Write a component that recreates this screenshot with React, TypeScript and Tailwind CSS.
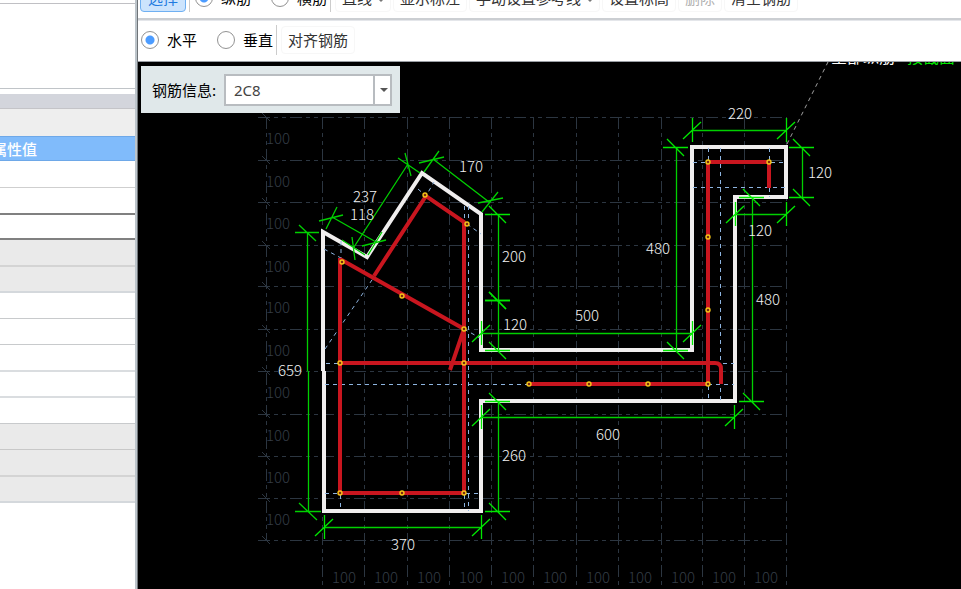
import { useState } from "react";

type Pt = [number, number];

const outline: Pt[] = [
  [323, 371], [323, 232], [367, 257], [422, 173], [481, 214], [481, 350], [692, 350],
  [692, 147], [786, 147], [786, 197], [735, 197], [735, 401], [481, 401], [481, 511],
  [324, 511], [324, 371],
];

const bars: string[] = [
  "M340 258V493H464V222L426 196L374 276",
  "M340 259L464 329L450 370",
  "M340 363H715Q721 363 721 369V384",
  "M529 384H708V162H769V188",
];

const nodes: Pt[] = [
  [342, 262], [402, 296], [425, 195], [467, 224], [464, 329], [340, 363], [464, 363],
  [340, 493], [402, 493], [464, 493], [529, 384], [589, 384], [648, 384], [708, 384],
  [708, 310], [708, 237], [708, 162], [769, 162],
];

const coverLines: string[] = [
  "M324 249L341 258", "M341 241V258", "M325 349L374 277", "M418 189L426 196L434 182",
  "M464.5 206V222", "M468.5 206V511", "M467 224L481 234", "M464 329L480 338",
  "M326 363.5H340", "M325 384.5H529", "M325 493.5H340", "M466 493.5H480",
  "M340.5 495V510", "M464.5 495V511", "M720.5 148V400", "M708.5 148V162",
  "M708.5 386V400", "M769.5 148V162", "M769.5 188V197", "M693 162.5H708",
  "M771 162.5H785", "M693 187.5H785", "M723 363.5H734", "M708 384.5H734",
];

const gridX = [322, 364, 407, 449, 491, 533, 576, 618, 661, 702, 744, 786];
const gridY = [117, 160, 202, 245, 286, 329, 371, 414, 456, 498, 540];

const horizontalDims: { y: number; x1: number; x2: number }[] = [
  { y: 130, x1: 692, x2: 786 },
  { y: 214, x1: 735, x2: 786 },
  { y: 333, x1: 481, x2: 692 },
  { y: 417, x1: 481, x2: 734 },
  { y: 527, x1: 324, x2: 481 },
];

const verticalDims: { x: number; y1: number; y2: number }[] = [
  { x: 676, y1: 147, y2: 350 },
  { x: 802, y1: 147, y2: 197 },
  { x: 752, y1: 197, y2: 401 },
  { x: 498, y1: 214, y2: 300 },
  { x: 498, y1: 300, y2: 350 },
  { x: 498, y1: 401, y2: 511 },
];

const slantedDims: string[] = [
  "M433 159L489 202M419 163L444 157M439 151L424 172M478 203L503 198M498 192L482 212",
  "M408 164L354 247M398 158L420 173M405 153L411 176M342 240L365 255M352 237L355 260",
  "M332 217L376 242M319 221L343 215M337 207L326 229M362 246L386 240M382 232L368 255",
];

const dimLabels: [number, number, string][] = [
  [740, 114, "220"], [820, 173, "120"], [760, 231, "120"], [658, 249, "480"],
  [768, 300, "480"], [587, 316, "500"], [608, 435, "600"], [515, 325, "120"],
  [514, 257, "200"], [514, 456, "260"], [403, 545, "370"], [290, 371, "659"],
  [365, 197, "237"], [362, 215, "118"], [471, 167, "170"],
];

function SectionDrawing() {
  return (
    <svg
      width="823"
      height="527"
      viewBox="138 62 823 527"
      fill="none"
      className="block shrink-0"
      role="img"
      aria-label="截面钢筋图"
    >
      <g stroke="#2c3641" strokeWidth="1" strokeDasharray="12 4 4 4 4 4">
        {gridX.map((x) => <path key={x} d={`M${x + 0.5} 117V589`} />)}
        {gridY.map((y) => <path key={y} d={`M258 ${y + 0.5}H784`} />)}
        <path d="M266.5 117V540" />
      </g>
      <g stroke="#2c3641">
        {gridY.map((y) => <path key={y} d={`M262 ${y - 4}L270 ${y + 4}`} />)}
      </g>
      <g fill="#343c46" fontSize="15" textAnchor="middle" className="font-['Noto_Sans_CJK_SC',sans-serif] font-light">
        {gridY.slice(0, -1).map((y) => <text key={y} x="278" y={y + 27}>100</text>)}
        {gridX.slice(0, -1).map((x) => <text key={x} x={x + 22} y="583">100</text>)}
      </g>

      <path d={`M${outline.map((p) => p.join(" ")).join("L")}`} stroke="#f0eeee" strokeWidth="4" />
      <g stroke="#8db4e0" strokeWidth="1" strokeDasharray="4 4">
        {coverLines.map((d) => <path key={d} d={d} />)}
      </g>
      <path d="M787 144L828 62" stroke="#a0a0a0" strokeDasharray="4 4" />
      <g stroke="#c9161f" strokeWidth="4">
        {bars.map((d) => <path key={d} d={d} />)}
      </g>
      <g stroke="#f5c518" strokeWidth="1.4" fill="#7a2a10">
        {nodes.map(([x, y]) => <circle key={`${x}-${y}`} cx={x} cy={y} r="2" />)}
      </g>

      <g stroke="#00d000" strokeWidth="1.3">
        {horizontalDims.map(({ y, x1, x2 }) => (
          <g key={y}>
            <path d={`M${x1} ${y + 0.5}H${x2}`} />
            {[x1, x2].map((x) => (
              <path key={x} d={`M${x + 0.5} ${y - 12}V${y + 12}M${x - 9} ${y + 9}L${x + 9} ${y - 8}`} stroke="#00e800" />
            ))}
          </g>
        ))}
        {verticalDims.map(({ x, y1, y2 }) => (
          <g key={`${x}-${y1}`}>
            <path d={`M${x + 0.5} ${y1}V${y2}`} />
            {[y1, y2].map((y) => (
              <path key={y} d={`M${x - 13} ${y + 0.5}H${x + 12}M${x - 9} ${y - 8}L${x + 8} ${y + 9}`} stroke="#00e800" />
            ))}
          </g>
        ))}
        <path d="M307.5 232V371M308.5 371V511" />
        <path d="M295 232.5H319M299 225L316 241M295 511.5H321M299 503L317 520" />
        {slantedDims.map((d) => <path key={d} d={d} />)}
      </g>
      <g fill="#f2f2f2" fontSize="15" textAnchor="middle" className="font-['Noto_Sans_CJK_SC',sans-serif] font-light">
        {dimLabels.map(([x, y, t]) => <text key={`${x}-${y}`} x={x} y={y + 5}>{t}</text>)}
      </g>
      <g fontSize="16" className="font-['Noto_Sans_CJK_SC',sans-serif]">
        <text x="831" y="63" fill="#ffffff">全部纵筋</text>
        <text x="907" y="63" fill="#00e800">按截面</text>
      </g>
    </svg>
  );
}

function Radio({ name, label, checked, onSelect }: { name: string; label: string; checked: boolean; onSelect: () => void }) {
  return (
    <label className="flex h-7 shrink-0 items-center gap-2 text-black">
      <input
        type="radio"
        name={name}
        checked={checked}
        onChange={onSelect}
        className="size-[18px] appearance-none rounded-full border border-[#929292] bg-white checked:bg-[radial-gradient(circle,#4c9cff_0_4px,#ffffff_5px)]"
      />
      {label}
    </label>
  );
}

function ToolButton({ children, menu, disabled }: { children: string; menu?: boolean; disabled?: boolean }) {
  return (
    <button
      disabled={disabled}
      className="flex h-7 shrink-0 items-center gap-[6px] rounded border border-[#f7f7f7] px-[6px] disabled:text-[#b0b0b0]"
    >
      {children}
      {menu && <span className="mt-1 size-0 border-x-[3px] border-t-[3px] border-x-transparent border-t-[#777]" />}
    </button>
  );
}

const rows: string[] = [
  "h-[27px] bg-white border-b border-[#cfcfcf]",
  "h-[26px] bg-white border-b-2 border-[#808080]",
  "h-[25px] bg-white border-b-2 border-[#808080]",
  "h-[27px] bg-[#eaeaea] border-b-2 border-[#d4d4d4]",
  "h-[26px] bg-[#eaeaea] border-b-2 border-[#d4d8dc]",
  "h-[27px] bg-white border-b border-[#c8cacc]",
  "h-[26px] bg-white border-b border-[#c8cacc]",
  "h-[26px] bg-white border-b-2 border-[#dadde0]",
  "h-[26px] bg-white border-b-2 border-[#dadde0]",
  "h-[27px] bg-white border-b border-[#c8cacc]",
  "h-[26px] bg-[#eaeaea] border-b border-[#c8c8c8]",
  "h-[26px] bg-[#eaeaea] border-b-2 border-[#d4d4d4]",
  "h-[26px] bg-[#eaeaea] border-b-2 border-[#d4d8dc]",
];

export default function App() {
  const [kind, setKind] = useState("纵筋");
  const [direction, setDirection] = useState("水平");

  return (
    <div className="flex h-screen overflow-hidden bg-white font-['Noto_Sans_CJK_SC',sans-serif] text-[15px] leading-5 text-[#333]">
      <aside className="flex w-[135px] shrink-0 flex-col overflow-hidden">
        <div className="h-1 shrink-0 border-b border-[#c0c0c4]" />
        <div className="h-[85px] shrink-0 border-b border-[#c0c4c8]" />
        <div className="h-[5px] shrink-0" />
        <div className="h-[15px] shrink-0 border-b border-[#c4c4c8] bg-[#d3d5dc]" />
        <div className="h-[27px] shrink-0 bg-[#eeeeee]" />
        <table className="w-full border-collapse">
          <thead>
            <tr className="h-6 border-y border-[#6ea8e8] bg-[#80bbfb]">
              <th className="p-0 text-left font-medium text-white">
                <div className="-ml-2 whitespace-nowrap">属性值</div>
              </th>
            </tr>
          </thead>
          <tbody>
            {rows.map((row, i) => (
              <tr key={i} className={row}>
                <td className="p-0" />
              </tr>
            ))}
          </tbody>
        </table>
      </aside>
      <div className="w-[3px] shrink-0 border-r border-[#6f7478] bg-[#bcc4ca]" />

      <main className="flex min-w-0 flex-1 flex-col overflow-hidden">
        <div className="flex h-[18px] shrink-0 items-end overflow-hidden pb-[6px] pl-[2px]">
          <button className="h-7 w-[46px] shrink-0 rounded border border-[#6fb0f2] bg-[#cce4fd] text-[#1f7be0]">选择</button>
          <div className="mr-[5px] ml-[3px] h-8 w-px shrink-0 bg-[#ccc]" />
          <div className="flex gap-5">
            <Radio name="kind" label="纵筋" checked={kind === "纵筋"} onSelect={() => setKind("纵筋")} />
            <Radio name="kind" label="横筋" checked={kind === "横筋"} onSelect={() => setKind("横筋")} />
          </div>
          <div className="mr-1 ml-[3px] h-8 w-px shrink-0 bg-[#ccc]" />
          <div className="flex gap-[2px]">
            <ToolButton menu>直线</ToolButton>
            <ToolButton>显示标注</ToolButton>
            <ToolButton menu>手动设置参考线</ToolButton>
            <ToolButton>设置标高</ToolButton>
            <ToolButton disabled>删除</ToolButton>
            <ToolButton>清空钢筋</ToolButton>
          </div>
        </div>
        <div className="h-[3px] shrink-0 border-b border-[#e4e6ea] bg-[#cbced2]" />
        <div className="flex h-[41px] shrink-0 items-center border-b border-[#9a9ea4] pb-[2px] pl-[3px]">
          <div className="flex gap-5">
            <Radio name="direction" label="水平" checked={direction === "水平"} onSelect={() => setDirection("水平")} />
            <Radio name="direction" label="垂直" checked={direction === "垂直"} onSelect={() => setDirection("垂直")} />
          </div>
          <div className="mr-1 ml-[3px] h-[30px] w-px bg-[#ccc]" />
          <ToolButton>对齐钢筋</ToolButton>
        </div>

        <section className="relative flex-1 overflow-hidden bg-black">
          <SectionDrawing />
          <div className="absolute top-1 left-[3px] flex h-[47px] w-[259px] items-center bg-[#e0e8ea] pr-2 pl-[11px]">
            <label htmlFor="rebar" className="w-[72px] shrink-0 text-black">钢筋信息:</label>
            <div className="relative flex-1">
              <select
                id="rebar"
                className="block h-8 w-full appearance-none border-2 border-[#b8bcc0] bg-white pl-2 font-['Noto_Sans','Noto_Sans_CJK_SC',sans-serif] text-[#444]"
              >
                <option>2C8</option>
              </select>
              <div className="pointer-events-none absolute inset-y-0 right-0 flex w-[19px] items-center justify-center border-l-2 border-[#b8bcc0]">
                <span className="size-0 border-x-4 border-t-4 border-x-transparent border-t-[#555]" />
              </div>
            </div>
          </div>
        </section>
      </main>
    </div>
  );
}
